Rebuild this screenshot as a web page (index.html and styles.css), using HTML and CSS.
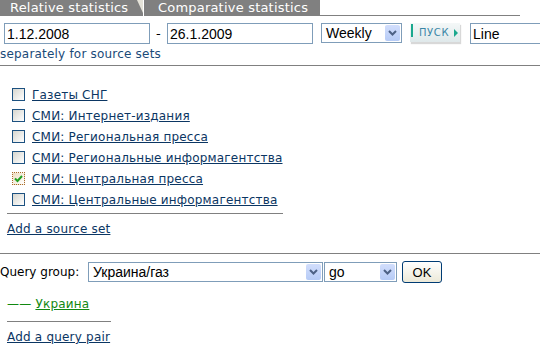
FILE: index.html
```html
<!doctype html>
<html lang="en">

	<head>
		<meta charset="UTF-8">
		<title>Statistics</title>
		<link rel="stylesheet" href="styles.css">
	</head>

	<body>
		<div class="tabs">
			<span class="tab tab-first">Relative statistics</span>
			<span class="tab tab-second">Comparative statistics</span>
			<span class="tab-rest"></span>
		</div>

		<div class="range">
			<input class="txt date" type="text" value="1.12.2008">
			<span class="dash">-</span>
			<input class="txt date" type="text" value="26.1.2009">
			<div class="sel sel-period">
				<span class="sel-val">Weekly</span>
				<span class="sel-arrow"><svg width="9" height="6" viewBox="0 0 9 6"><path d="M1 1l3.5 3.5L8 1" fill="none" stroke="#4d6185" stroke-width="2"/></svg></span>
			</div>
			<a class="go" href="javascript:;"><i class="go-bar"></i>ПУСК<i class="go-tri"></i></a>
			<input class="txt chart" type="text" value="Line">
		</div>
		<div class="note">separately for source sets</div>

		<div class="rule"></div>

		<ul class="sources">
			<li><span class="box"></span><a href="javascript:;">Газеты СНГ</a></li>
			<li><span class="box"></span><a href="javascript:;">СМИ: Интернет-издания</a></li>
			<li><span class="box"></span><a href="javascript:;">СМИ: Региональная пресса</a></li>
			<li><span class="box"></span><a href="javascript:;">СМИ: Региональные информагентства</a></li>
			<li><span class="box checked"><svg width="9" height="8" viewBox="0 0 9 8"><path d="M1 3.5l2.5 2.5L8 1" fill="none" stroke="#21a121" stroke-width="2"/></svg></span><a href="javascript:;">СМИ: Центральная пресса</a></li>
			<li><span class="box"></span><a href="javascript:;">СМИ: Центральные информагентства</a></li>
		</ul>
		<div class="short-rule src-rule"></div>
		<a class="add" href="javascript:;">Add a source set</a>

		<div class="rule rule-query"></div>

		<div class="query">
			<span class="query-label">Query group:</span>
			<div class="sel sel-group">
				<span class="sel-val">Украина/газ</span>
				<span class="sel-arrow"><svg width="9" height="6" viewBox="0 0 9 6"><path d="M1 1l3.5 3.5L8 1" fill="none" stroke="#4d6185" stroke-width="2"/></svg></span>
			</div>
			<div class="sel sel-op">
				<span class="sel-val">go</span>
				<span class="sel-arrow"><svg width="9" height="6" viewBox="0 0 9 6"><path d="M1 1l3.5 3.5L8 1" fill="none" stroke="#4d6185" stroke-width="2"/></svg></span>
			</div>
			<button class="ok" type="button">OK</button>
		</div>

		<div class="pair">—— <a href="javascript:;">Украина</a></div>
		<div class="short-rule pair-rule"></div>
		<a class="add" href="javascript:;">Add a query pair</a>
	</body>

</html>
```

FILE: styles.css
```css
body {
	margin: 0;
	font-family: "DejaVu Sans", Verdana, sans-serif;
	font-size: 12px;
	letter-spacing: 0.2px;
	color: #000;
	overflow: hidden;
}

a {
	color: #0b3663;
}

/* tabs */
.tabs {
	display: flex;
	width: 520px;
	height: 16px;
}

.tab {
	position: relative;
	flex-shrink: 0;
	background: #808080;
	color: #fff;
	font-size: 13px;
	line-height: 16px;
	box-sizing: border-box;
}

.tab-first {
	width: 143px;
	padding-left: 10px;
}

.tab-first::after {
	content: "";
	position: absolute;
	top: 0;
	right: 0;
	width: 6px;
	height: 13px;
	background: #e4e2d8;
	clip-path: polygon(0 0, 100% 0, 100% 100%);
}

.tab-second {
	width: 176px;
	margin-left: 1px;
	padding-left: 14px;
}

.tab-rest {
	flex: 1;
	border-bottom: 1px solid #808080;
}

/* date range row */
.range {
	display: flex;
	align-items: flex-start;
	margin-top: 7px;
	padding-left: 4px;
	height: 21px;
}

.range > * {
	flex-shrink: 0;
}

.txt {
	box-sizing: border-box;
	height: 21px;
	border: 1px solid #7f9db9;
	padding: 0 2px;
	font-family: "Liberation Sans", Arial, sans-serif;
	font-size: 14px;
	letter-spacing: 0;
	color: #000;
	outline: none;
}

.date {
	width: 146px;
}

.dash {
	width: 17px;
	text-align: center;
	line-height: 22px;
	font-size: 13px;
}

.sel {
	display: flex;
	flex-shrink: 0;
	box-sizing: border-box;
	height: 20px;
	border: 1px solid #7f9db9;
	background: #fff;
	padding: 1px;
	font-family: "Liberation Sans", Arial, sans-serif;
	font-size: 14px;
	letter-spacing: 0;
}

.sel-val {
	flex: 1;
	padding-left: 3px;
	line-height: 16px;
}

.sel-arrow {
	display: flex;
	align-items: center;
	justify-content: center;
	width: 15px;
	border-radius: 2px;
	background: linear-gradient(#d2defc, #b6cbf6);
}

.sel-period {
	width: 81px;
	margin-left: 8px;
}

.go {
	position: relative;
	display: flex;
	align-items: center;
	box-sizing: border-box;
	width: 50px;
	height: 19px;
	margin-left: 8px;
	padding-left: 9px;
	background: linear-gradient(#f4f8f8, #dfe8ea);
	box-shadow: 1px 2px 1px #d8d8d8;
	color: #3a86a6;
	font-size: 10px;
	text-decoration: none;
	letter-spacing: 0.6px;
}

.go-bar {
	position: absolute;
	left: 1px;
	top: 1px;
	width: 2px;
	height: 13px;
	background: #1aa88e;
}

.go-tri {
	margin-left: 5px;
	width: 0;
	height: 0;
	border-left: 4px solid #1aa88e;
	border-top: 4px solid transparent;
	border-bottom: 4px solid transparent;
}

.chart {
	width: 100px;
	margin-left: 10px;
}

.note {
	margin-top: 2px;
	color: #1a4a78;
	line-height: 16px;
}

.rule {
	margin-top: 3px;
	border-top: 1px solid #808080;
}

/* source list */
.sources {
	list-style: none;
	margin: 18px 0 0;
	padding: 0 0 0 12px;
}

.sources li {
	display: flex;
	align-items: center;
	gap: 7px;
	height: 21px;
}

.box {
	display: flex;
	align-items: center;
	justify-content: center;
	box-sizing: border-box;
	width: 13px;
	height: 13px;
	border: 1px solid #1c5180;
	background: linear-gradient(135deg, #d6d6cf, #fff);
}

.box.checked {
	border: 1px dotted #a86a2a;
	background: linear-gradient(135deg, #ecdcc0, #fff);
}

.short-rule {
	margin-left: 7px;
	border-top: 1px solid #808080;
}

.src-rule {
	width: 276px;
	margin-top: 3px;
}

.add {
	display: inline-block;
	margin: 8px 0 0 7px;
	line-height: 14px;
}

.rule-query {
	margin-top: 17px;
}

/* query row */
.query {
	display: flex;
	align-items: center;
	height: 22px;
	margin-top: 7px;
}

.query-label {
	flex-shrink: 0;
	width: 88px;
	letter-spacing: 0;
}

.sel-group {
	width: 235px;
}

.sel-op {
	width: 73px;
	margin-left: 1px;
}

.ok {
	box-sizing: border-box;
	width: 40px;
	height: 22px;
	margin-left: 5px;
	border: 1px solid #003c74;
	border-radius: 3px;
	background: linear-gradient(#fff, #ece9d8);
	font-family: "Liberation Sans", Arial, sans-serif;
	font-size: 13px;
	padding: 0;
}

.pair {
	margin: 13px 0 0 7px;
	color: #118811;
	line-height: 16px;
}

.pair a {
	color: #118811;
}

.pair-rule {
	width: 104px;
	margin-top: 9px;
}
```
